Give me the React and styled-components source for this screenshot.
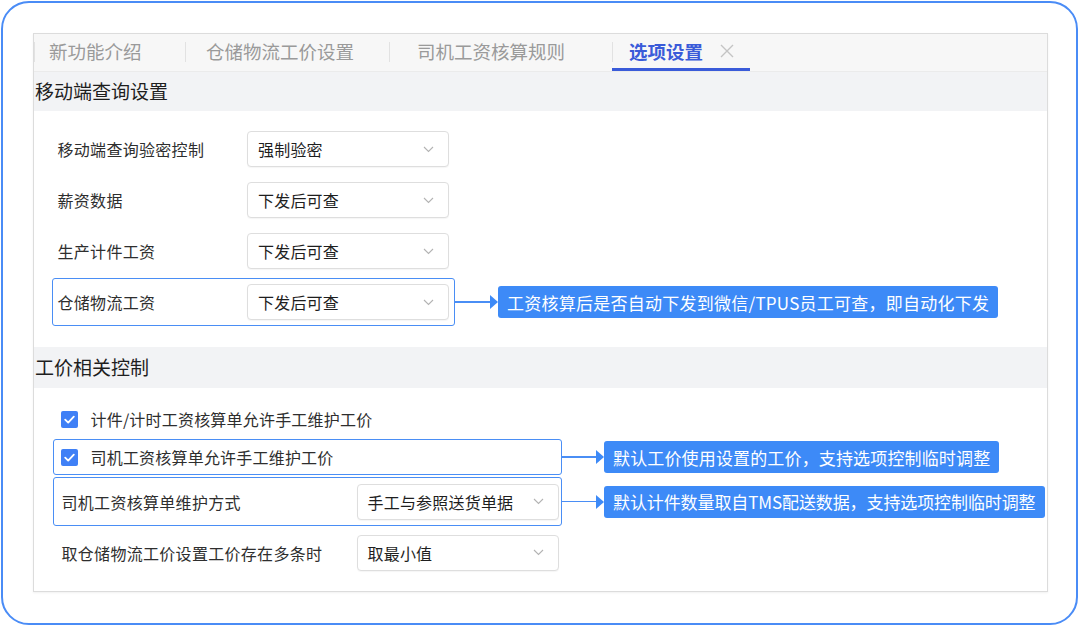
import React from "react";
import styled, { createGlobalStyle } from "styled-components";

const Global = createGlobalStyle`
  html, body { margin: 0; padding: 0; background: #fff; }
  body { font-family: "Noto Sans CJK SC", "Noto Sans", sans-serif; }
  * { box-sizing: border-box; }
`;

const Page = styled.div`
  width: 1080px;
  height: 626px;
  padding: 1px 2px 1px 1px;
`;

const Frame = styled.div`
  width: 100%;
  height: 100%;
  border: 2px solid #4a8cf6;
  border-radius: 28px;
  padding: 30px 0 0 30px;
`;

const Panel = styled.div`
  width: 1015px;
  height: 559px;
  border: 1px solid #dcdcdc;
  box-shadow: 0 1px 2px rgba(0, 0, 0, 0.06);
  display: flex;
  flex-direction: column;
  background: #fff;
`;

const TabBar = styled.div`
  height: 38px;
  background: #f7f7f7;
  border-bottom: 1px solid #ebebeb;
  display: flex;
  align-items: stretch;
`;

const Tab = styled.div`
  position: relative;
  width: ${(p) => p.$w}px;
  padding-left: ${(p) => p.$pl}px;
  padding-bottom: 3px;
  display: flex;
  align-items: center;
  gap: 17px;
  font-size: 18.5px;
  line-height: 1;
  color: ${(p) => (p.$active ? "#3a5bd9" : "#9a9a9a")};
  font-weight: ${(p) => (p.$active ? 700 : 400)};
  &::before {
    content: "";
    position: absolute;
    left: 0;
    top: 8px;
    height: 20px;
    width: 1px;
    background: #e2e2e2;
  }
  &::after {
    content: "";
    position: absolute;
    left: 0;
    right: 0;
    bottom: 0;
    height: 3px;
    background: ${(p) => (p.$active ? "#3a5bd9" : "transparent")};
  }
`;

const CloseX = styled.span`
  display: inline-flex;
`;

const SectionHeader = styled.div`
  height: ${(p) => p.$h}px;
  margin-top: ${(p) => p.$mt || 0}px;
  background: #f2f3f5;
  display: flex;
  align-items: center;
  padding: 0 0 3px 1px;
  font-size: 19px;
  line-height: 1;
  color: #1e1e1e;
`;

const Body = styled.div`
  display: flex;
  flex-direction: column;
  gap: ${(p) => p.$gap}px;
  padding: ${(p) => p.$pad};
`;

const Row = styled.div`
  position: relative;
  width: ${(p) => p.$w}px;
  height: ${(p) => p.$h}px;
  border: 1.5px solid ${(p) => (p.$hl ? "#4a8ef5" : "transparent")};
  border-radius: 3px;
  display: flex;
  align-items: center;
  padding: 0 ${(p) => p.$pr ?? 5}px 0 ${(p) => p.$pl}px;
`;

const Label = styled.div`
  flex: 1;
  font-size: 16px;
  letter-spacing: 0.3px;
  color: #2e2e2e;
  white-space: nowrap;
`;

const Select = styled.div`
  width: 202px;
  height: 36px;
  border: 1px solid #dedede;
  border-radius: 4px;
  box-shadow: 0 1px 1px rgba(0, 0, 0, 0.04);
  display: flex;
  align-items: center;
  justify-content: space-between;
  padding: 0 14px 0 10px;
  font-size: 16px;
  letter-spacing: 0.2px;
  color: #1e1e1e;
  background: #fff;
`;

const Check = styled.span`
  width: 17px;
  height: 17px;
  border-radius: 2px;
  background: #3f80f6;
  display: inline-flex;
  align-items: center;
  justify-content: center;
  margin-right: 13px;
  flex: none;
`;

const CheckText = styled.span`
  font-size: 16px;
  letter-spacing: 0.2px;
  color: #2e2e2e;
  white-space: nowrap;
`;

const Note = styled.div`
  position: absolute;
  left: 100%;
  top: 50%;
  transform: translateY(-50%);
  display: flex;
  align-items: center;
`;

const Line = styled.div`
  width: ${(p) => p.$w}px;
  height: 1.5px;
  background: #4a8ef5;
`;

const Arrow = styled.div`
  width: 0;
  height: 0;
  border-top: 7px solid transparent;
  border-bottom: 7px solid transparent;
  border-left: 8px solid #3d8af7;
`;

const Bubble = styled.div`
  height: 32px;
  background: #3d8af7;
  border-radius: 3px;
  color: #fff;
  font-size: 17px;
  letter-spacing: ${(p) => p.$ls ?? 0.25}px;
  display: flex;
  align-items: center;
  padding: 0 9px;
  white-space: nowrap;
`;

const Chevron = () => (
  <svg width="11" height="7" viewBox="0 0 11 7" fill="none">
    <path d="M1 1l4.5 4.5L10 1" stroke="#b3b3b3" strokeWidth="1.1" />
  </svg>
);

const Tick = () => (
  <svg width="11" height="9" viewBox="0 0 11 9" fill="none">
    <path d="M1.2 4.6l3 3L9.8 1.6" stroke="#fff" strokeWidth="1.8" strokeLinecap="round" strokeLinejoin="round" />
  </svg>
);

const Annotation = ({ line, ls, children }) => (
  <Note>
    <Line $w={line} />
    <Arrow />
    <Bubble $ls={ls}>{children}</Bubble>
  </Note>
);

const SelectBox = ({ value }) => (
  <Select>
    <span>{value}</span>
    <Chevron />
  </Select>
);

export default function App() {
  return (
    <Page>
      <Global />
      <Frame>
        <Panel>
          <TabBar>
            <Tab $w={151} $pl={15}>新功能介绍</Tab>
            <Tab $w={204} $pl={21}>仓储物流工价设置</Tab>
            <Tab $w={223} $pl={28}>司机工资核算规则</Tab>
            <Tab $w={138} $pl={17} $active>
              选项设置
              <CloseX>
                <svg width="14" height="14" viewBox="0 0 14 14" fill="none">
                  <path d="M1 1l12 12M13 1L1 13" stroke="#c4c4c4" strokeWidth="1.4" />
                </svg>
              </CloseX>
            </Tab>
          </TabBar>
          <SectionHeader $h={39}>移动端查询设置</SectionHeader>
          <Body $gap={3} $pad="14px 0 0 18px">
            <Row $w={403} $h={48} $pl={4.5}>
              <Label>移动端查询验密控制</Label>
              <SelectBox value="强制验密" />
            </Row>
            <Row $w={403} $h={48} $pl={4.5}>
              <Label>薪资数据</Label>
              <SelectBox value="下发后可查" />
            </Row>
            <Row $w={403} $h={48} $pl={4.5}>
              <Label>生产计件工资</Label>
              <SelectBox value="下发后可查" />
            </Row>
            <Row $w={403} $h={48} $pl={4.5} $hl>
              <Label>仓储物流工资</Label>
              <SelectBox value="下发后可查" />
              <Annotation line={36}>工资核算后是否自动下发到微信/TPUS员工可查，即自动化下发</Annotation>
            </Row>
          </Body>
          <SectionHeader $h={41} $mt={21}>工价相关控制</SectionHeader>
          <Body $gap={2} $pad="13px 0 0 19px">
            <Row $w={509} $h={36} $pl={6.5}>
              <Check><Tick /></Check>
              <CheckText>计件/计时工资核算单允许手工维护工价</CheckText>
            </Row>
            <Row $w={509} $h={36} $pl={6.5} $hl>
              <Check><Tick /></Check>
              <CheckText>司机工资核算单允许手工维护工价</CheckText>
              <Annotation line={35} ls={0.15}>默认工价使用设置的工价，支持选项控制临时调整</Annotation>
            </Row>
            <Row $w={509} $h={49} $pl={7.5} $pr={2.5} $hl>
              <Label>司机工资核算单维护方式</Label>
              <SelectBox value="手工与参照送货单据" />
              <Annotation line={35} ls={-0.1}>默认计件数量取自TMS配送数据，支持选项控制临时调整</Annotation>
            </Row>
            <Row $w={509} $h={49} $pl={7.5} $pr={2.5}>
              <Label>取仓储物流工价设置工价存在多条时</Label>
              <SelectBox value="取最小值" />
            </Row>
          </Body>
        </Panel>
      </Frame>
    </Page>
  );
}
